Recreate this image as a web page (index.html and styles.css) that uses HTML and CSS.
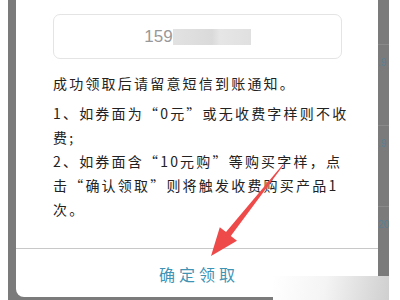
FILE: index.html
```html
<!DOCTYPE html>
<html lang="zh-CN">
<head>
    <meta charset="UTF-8">
    <meta name="viewport" content="width=device-width, initial-scale=1.0">
    <title>领取确认</title>
    <link rel="stylesheet" href="styles.css">
</head>
<body>
    <div class="screen">
        <div class="dialog">
            <div class="phone-box">
                <span class="phone">159</span><span class="mask"></span>
            </div>
            <div class="notes">
                <p class="lead">成功领取后请留意短信到账通知。</p>
                <p>1、如券面为“0元”或无收费字样则不收费;</p>
                <p>2、如券面含“10元购”等购买字样，点击“确认领取”则将触发收费购买产品1次。</p>
            </div>
            <div class="actions">
                <button class="confirm">确定领取</button>
            </div>
        </div>
        <div class="side">
            <span class="line"></span>
            <span class="tip">.9</span>
            <span class="line"></span>
            <span class="tip">.9</span>
            <span class="line"></span>
            <span class="tip">20</span>
        </div>
    </div>

    <svg class="arrow" width="400" height="300" viewBox="0 0 400 300">
        <polygon points="283.4,165.3 230.8,235.9 237,240.8 211,256 219.8,227.2 226,232.1 282.6,164.7" fill="#ee4a4a"/>
    </svg>
    <div class="stamp"></div>
</body>
</html>
```

FILE: styles.css
```css
body { margin: 0; width: 400px; height: 300px; overflow: hidden; background: #fff; font-family: "Noto Sans CJK SC", sans-serif; position: relative; }
.screen { display: flex; margin-left: 8px; width: 381px; height: 300px; background: #7b7b7b; }
.dialog { margin-left: 8px; width: 362px; height: 297px; background: #fff; border-radius: 0 0 8px 8px; display: flex; flex-direction: column; }
.phone-box { margin: 14px 36px 0 37px; height: 43px; border: 1px solid #e4e4e4; border-radius: 7px; display: flex; align-items: center; justify-content: center; }
.phone { font-family: "Liberation Sans", Arial, sans-serif; font-size: 17px; color: #999; letter-spacing: 0; }
.mask { width: 78px; height: 16px; background: linear-gradient(90deg, #e2e2e2 0%, #dadada 50%, #e6e6e6 60%, #e0e0e0 100%); }
.notes { margin: 12px 28px 0 37px; font-size: 14px; letter-spacing: 2.2px; line-height: 24px; color: #222; flex: 1; }
.notes p { margin: 0; }
.notes .lead { margin-bottom: 6px; }
.actions { border-top: 1px solid #c8c8c8; height: 48px; display: flex; align-items: center; justify-content: center; }
.confirm { border: none; background: none; font-family: "Noto Sans CJK SC", sans-serif; font-size: 16px; letter-spacing: 4px; color: #3f93b4; padding: 0 0 0 4px; margin-top: 2px; cursor: pointer; }
.side { flex: 1; display: flex; flex-direction: column; padding-top: 44px; }
.line { height: 1px; background: #8a8a8a; margin-bottom: 12px; }
.tip { font-family: "Liberation Sans", Arial, sans-serif; font-size: 10px; color: #5c7f92; height: 68px; }
.arrow { position: absolute; left: 0; top: 0; }
.stamp { position: absolute; left: 273px; top: 276px; width: 116px; height: 24px; background: linear-gradient(100deg, #fff 0%, #f4f4f4 45%, #cfcfcf 100%); }
```
